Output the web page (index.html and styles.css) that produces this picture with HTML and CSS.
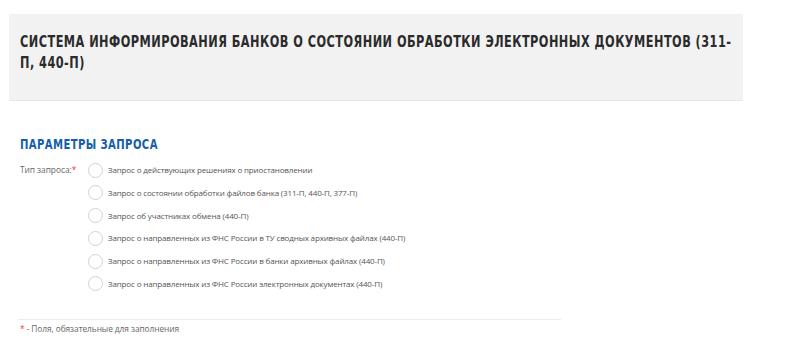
FILE: index.html
```html
<!DOCTYPE html>
<html lang="ru">
<head>
<meta charset="utf-8">
<title>Система информирования банков</title>
<link rel="stylesheet" href="styles.css">
</head>
<body>
<div class="header">
  <h1 class="title">Система информирования банков о состоянии обработки электронных документов (311-П, 440-П)</h1>
</div>
<div class="main">
  <h2 class="section-title">Параметры запроса</h2>
  <div class="form-row">
    <div class="form-label">Тип запроса:<span class="req">*</span></div>
    <div class="radio-list">
      <label class="radio"><span class="radio-circle"></span><span class="radio-text">Запрос о действующих решениях о приостановлении</span></label>
      <label class="radio"><span class="radio-circle"></span><span class="radio-text">Запрос о состоянии обработки файлов банка (311-П, 440-П, 377-П)</span></label>
      <label class="radio"><span class="radio-circle"></span><span class="radio-text">Запрос об участниках обмена (440-П)</span></label>
      <label class="radio"><span class="radio-circle"></span><span class="radio-text">Запрос о направленных из ФНС России в ТУ сводных архивных файлах (440-П)</span></label>
      <label class="radio"><span class="radio-circle"></span><span class="radio-text">Запрос о направленных из ФНС России в банки архивных файлах (440-П)</span></label>
      <label class="radio"><span class="radio-circle"></span><span class="radio-text">Запрос о направленных из ФНС России электронных документах (440-П)</span></label>
    </div>
  </div>
  <div class="footer-note"><span class="req">*</span> - Поля, обязательные для заполнения</div>
</div>
</body>
</html>
```

FILE: styles.css
```css
html, body {
  margin: 0;
  padding: 0;
  background: #ffffff;
}
body {
  font-family: "Open Sans", "Liberation Sans", sans-serif;
  color: #555555;
}
.header {
  margin: 14px 57px 0 9px;
  height: 87px;
  box-sizing: border-box;
  background: #f2f2f2;
  border-bottom: 1px solid #e6e6e6;
  padding: 17px 11px 0 11px;
  overflow: hidden;
}
.title {
  margin: 0;
  width: 918px;
  transform: scaleX(0.785);
  transform-origin: 0 0;
  font-family: "DejaVu Sans Condensed", "DejaVu Sans", sans-serif;
  font-weight: bold;
  font-size: 16px;
  line-height: 21px;
  letter-spacing: 0.6px;
  text-transform: uppercase;
  color: #2b2b2b;
}
.main {
  padding: 0 20px;
}
.section-title {
  margin: 33px 0 0 0;
  width: 300px;
  transform: scaleX(0.8);
  transform-origin: 0 0;
  font-family: "DejaVu Sans Condensed", "DejaVu Sans", sans-serif;
  font-weight: bold;
  font-size: 14px;
  line-height: 20px;
  letter-spacing: 0.5px;
  text-transform: uppercase;
  color: #1560a8;
}
.form-row {
  display: flex;
  margin-top: 9px;
}
.form-label {
  width: 69px;
  flex: none;
  font-size: 8.4px;
  letter-spacing: -0.05px;
  line-height: 14px;
  color: #666666;
}
.req {
  color: #e53935;
}
.radio-list {
  display: flex;
  flex-direction: column;
  gap: 8.8px;
}
.radio {
  display: flex;
  align-items: center;
  height: 14px;
}
.radio-circle {
  width: 13px;
  height: 13px;
  border: 1px solid #d2d2d2;
  border-radius: 50%;
  background: #ffffff;
  flex: none;
  margin-right: 5px;
  margin-left: -1px;
}
.radio-text {
  font-size: 8px;
  letter-spacing: -0.15px;
  line-height: 14px;
  color: #555555;
}
.footer-note {
  width: 541px;
  margin: 28px 0 0 -2px;
  border-top: 1px solid #ececec;
  padding: 3px 0 0 2px;
  font-size: 8.3px;
  letter-spacing: -0.05px;
  line-height: 12px;
  color: #666666;
}
```
